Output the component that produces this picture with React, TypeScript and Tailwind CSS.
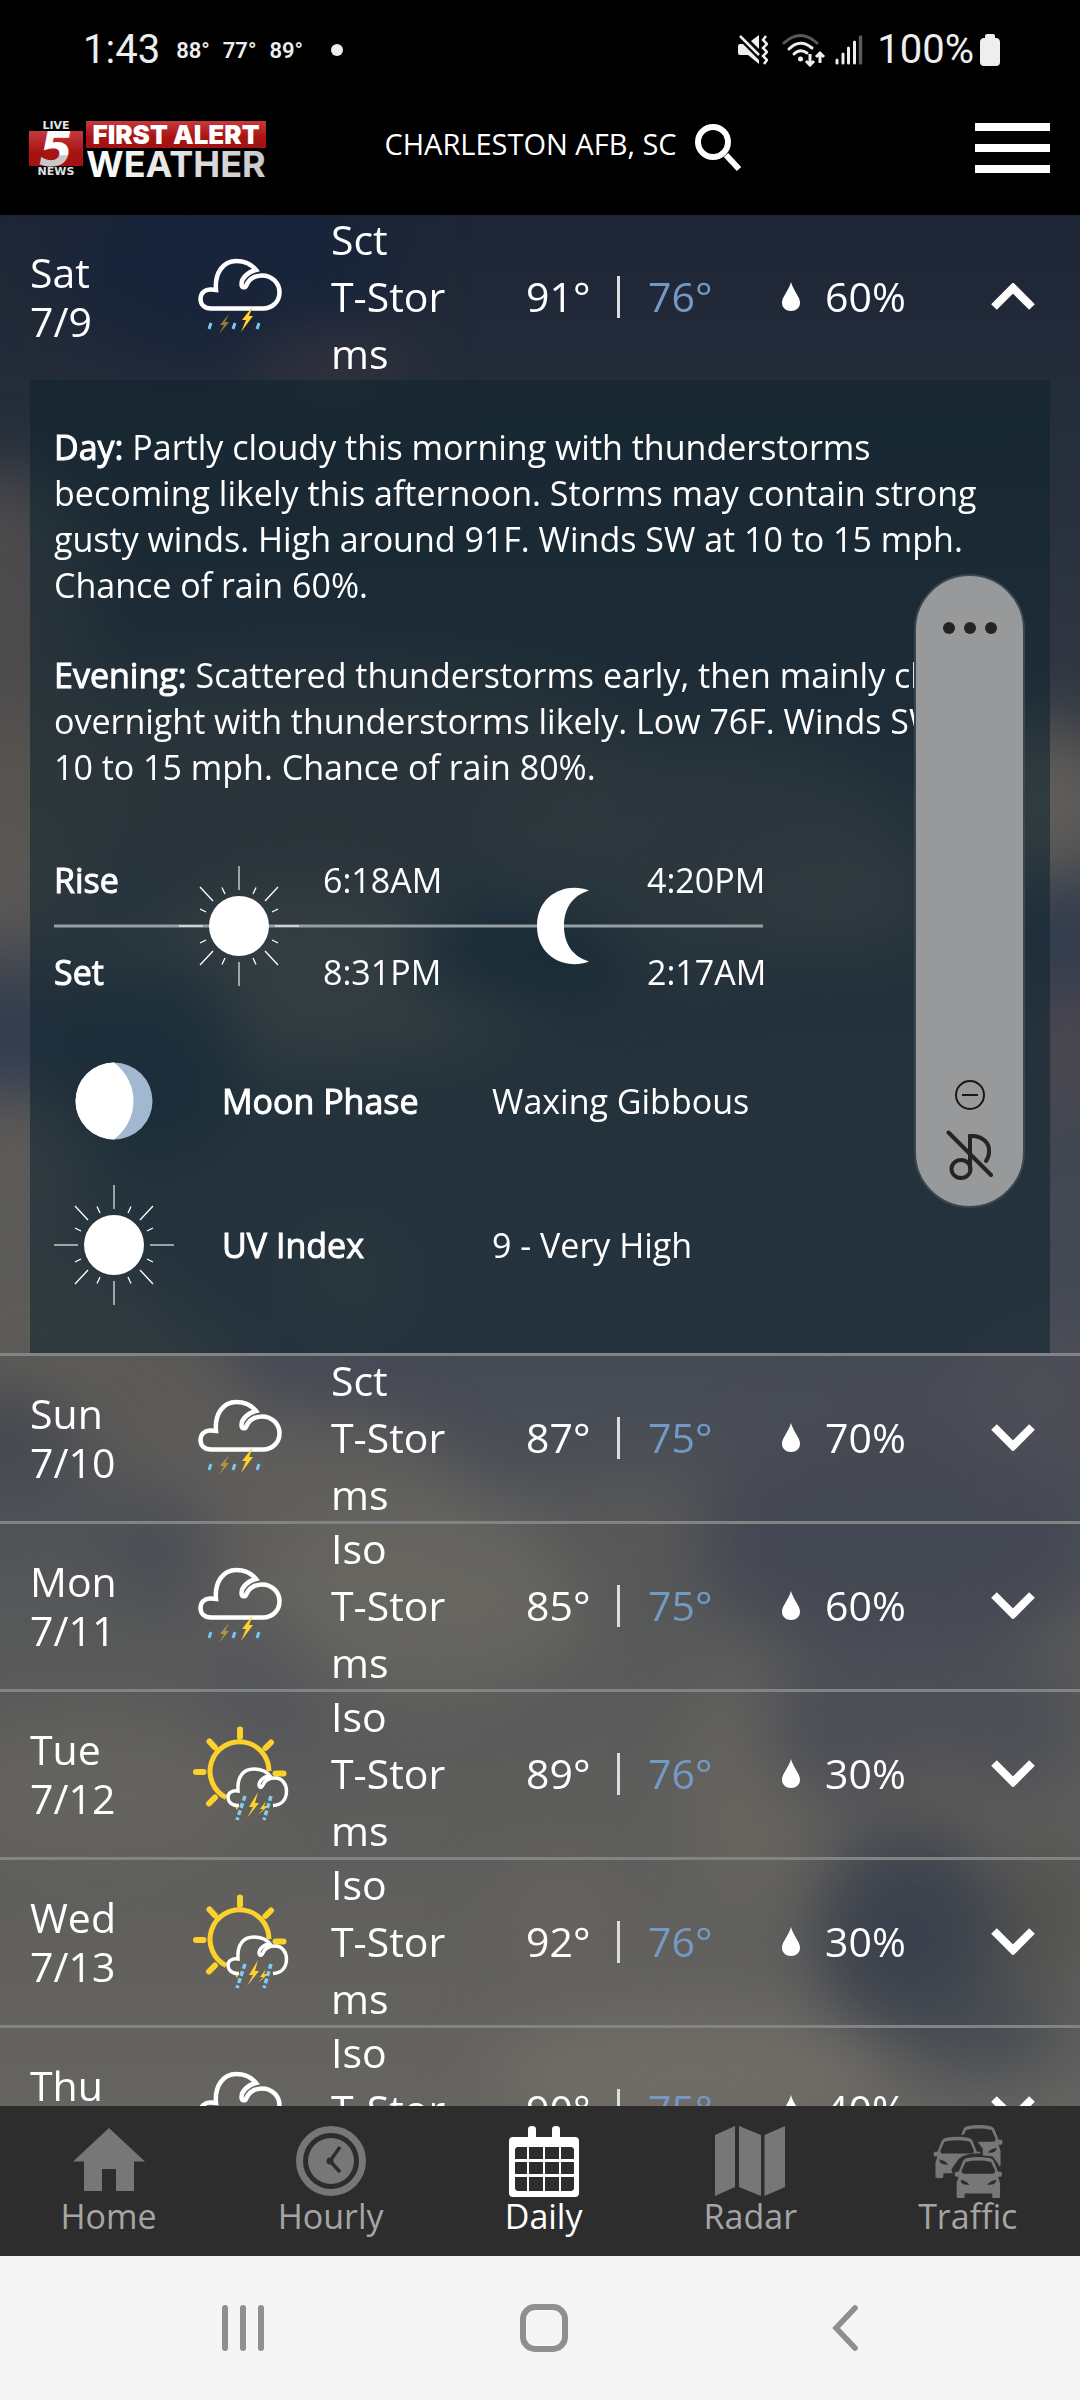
import { useState } from "react";

type IconName = "storm" | "sunStorm";

type Day = {
  name: string;
  date: string;
  icon: IconName;
  chance: string;
  high: string;
  low: string;
  rain: string;
};

const days: Day[] = [
  { name: "Sat", date: "7/9", icon: "storm", chance: "Sct", high: "91°", low: "76°", rain: "60%" },
  { name: "Sun", date: "7/10", icon: "storm", chance: "Sct", high: "87°", low: "75°", rain: "70%" },
  { name: "Mon", date: "7/11", icon: "storm", chance: "Iso", high: "85°", low: "75°", rain: "60%" },
  { name: "Tue", date: "7/12", icon: "sunStorm", chance: "Iso", high: "89°", low: "76°", rain: "30%" },
  { name: "Wed", date: "7/13", icon: "sunStorm", chance: "Iso", high: "92°", low: "76°", rain: "30%" },
  { name: "Thu", date: "7/14", icon: "storm", chance: "Iso", high: "90°", low: "75°", rain: "40%" },
];

function StormIcon() {
  return (
    <svg viewBox="0 0 84 77" className="h-[77px] w-[84px]" fill="none" aria-hidden="true">
      <path
        d="M18 32C16.500 15 25 3 38.500 3C47 3 54 7 58 12C50 14 43.500 20 43.500 26C43.500 30 47 30.500 48.500 27C51 21 57 17.500 64 17.500C74 17.500 81.500 25 81.500 34.500C81.500 43 75 50.500 65 50.500H13C6 50.500 2.500 46 2.500 41C2.500 35 7 31 13 31.500Z"
        stroke="white"
        strokeWidth="4.500"
      />
      <path d="M31 56L22 67H26L21 76L31 64H27Z" fill="#ffd02e" opacity=".52" />
      <path d="M55 48L44 62H48L43 74L55 58H51Z" fill="#ffd02e" />
      <path d="M13 65L11 71M37 65L35 71M61 65L59 71" stroke="#75c8f2" strokeWidth="3" />
    </svg>
  );
}

function SunStormIcon() {
  return (
    <svg viewBox="12 16 97 97" className="h-[97px] w-[97px]" fill="none" aria-hidden="true">
      <path d="M46 88.500A29.500 29.500 0 1 1 89 62" stroke="#fdd12c" strokeWidth="5" />
      <path
        d="M60 20.500V28M29.500 32.500L35 38.500M91 33.500L85.500 39M16 63H23.500M95.500 64.500H103.500M29 94.500L35 88.500"
        stroke="#fdd12c"
        strokeWidth="6"
        strokeLinecap="round"
      />
      <path
        d="M59 96.500C52 97 48 93 48 88C48 84 52 81 58 82C57 68 63 60 74 60C81 60 87 63 90 67C84 67 79 72 79 76C80 80 82 78 83 76C85 71 90 69 95 69C102 69 106.500 75 106.500 82C106.500 90 102 96 93 96.500"
        stroke="white"
        strokeWidth="3.500"
      />
      <path d="M65 87L57 111M91 87L84 111" stroke="#7fcdf3" strokeWidth="3.500" strokeDasharray="5 2.500" />
      <path d="M78 83L69 98H73L67 109L79 94H75ZM86 92L80 100H83L78 106L88 97H84ZM55 98L58 98L57 101Z" fill="#fdd12c" />
    </svg>
  );
}

function SunIcon() {
  return (
    <svg viewBox="0 0 120 120" className="h-[120px] w-[120px]" fill="none" stroke="white" aria-hidden="true">
      <circle cx="60" cy="60" r="30" fill="white" stroke="none" />
      <path d="M60 0V24M60 96V120M0 60H24M96 60H120" strokeWidth="2" opacity=".55" />
      <path
        d="M21 21L34 35M99 21L86 35M21 99L34 85M99 99L86 85M43 21.500L46 28M77 21.500L74 28M43 98.500L46 92M77 98.500L74 92M21 43L27 46M99 43L93 46M21 77L27 74M99 77L93 74"
        strokeWidth="1.300"
      />
    </svg>
  );
}

function Details() {
  return (
    <div className="mx-[30px] bg-[rgba(16,36,47,0.6)] px-6 pt-11 pb-12 text-[34px] leading-[46px]">
      <p>
        <b className="font-normal [-webkit-text-stroke:1px_white]">Day:</b> Partly cloudy this morning with
        thunderstorms becoming likely this afternoon. Storms may contain strong gusty winds. High around 91F. Winds SW
        at 10 to 15 mph. Chance of rain 60%.
      </p>
      <p className="mt-11">
        <b className="font-normal [-webkit-text-stroke:1px_white]">Evening:</b> Scattered thunderstorms early, then
        mainly cloudy overnight with thunderstorms likely. Low 76F. Winds SW at 10 to 15 mph. Chance of rain 80%.
      </p>
      <div className="relative mt-11 grid w-[709px] grid-cols-[125px_144px_214px_110px_auto] grid-rows-[92px_92px] items-center">
        <div className="absolute inset-x-0 top-1/2 h-[3px] -translate-y-1/2 bg-[#989fa3]" />
        <span className="[-webkit-text-stroke:1px_white]">Rise</span>
        <div className="relative row-span-2">
          <SunIcon />
        </div>
        <span>6:18AM</span>
        <svg viewBox="0 0 52 78" className="relative row-span-2 h-[78px] w-[52px]" aria-hidden="true">
          <path d="M52 3.500C30 -5 0 7 0 39C0 71 30 83 52 74.500C34 69 27 55 27 39C27 23 34 9 52 3.500Z" fill="white" />
        </svg>
        <span>4:20PM</span>
        <span className="[-webkit-text-stroke:1px_white]">Set</span>
        <span>8:31PM</span>
        <span>2:17AM</span>
      </div>
      <dl className="mt-[23px] grid grid-cols-[168px_270px_auto] grid-rows-[120px_120px] items-center gap-y-6">
        <svg viewBox="0 0 120 120" className="h-[120px] w-[120px]" aria-hidden="true">
          <circle cx="60" cy="60" r="38.500" fill="#a1b8d0" />
          <path d="M60 21.500A38.500 38.500 0 0 0 60 98.500C86 78 86 42 60 21.500Z" fill="white" />
        </svg>
        <dt className="[-webkit-text-stroke:1px_white]">Moon Phase</dt>
        <dd>Waxing Gibbous</dd>
        <SunIcon />
        <dt className="[-webkit-text-stroke:1px_white]">UV Index</dt>
        <dd>9 - Very High</dd>
      </dl>
    </div>
  );
}

function DayRow({ day, open, onToggle }: { day: Day; open: boolean; onToggle: () => void }) {
  return (
    <li className="border-t-[3px] border-[#828384] first:border-t-0">
      <button
        type="button"
        onClick={onToggle}
        aria-expanded={open}
        className="grid min-h-[165px] w-full grid-cols-[minmax(0,150fr)_minmax(0,151fr)_minmax(0,195fr)_minmax(0,91fr)_minmax(0,31fr)_minmax(0,134fr)_minmax(0,43fr)_minmax(0,166fr)_minmax(0,59fr)] items-center px-[30px] pb-[2px] text-left text-[41px] leading-[57px]"
      >
        <span className="leading-[49px]">
          {day.name}
          <br />
          {day.date}
        </span>
        <span className="flex w-[120px] justify-center">{day.icon === "storm" ? <StormIcon /> : <SunStormIcon />}</span>
        <span className="-my-1 w-[130px]">
          {day.chance} <span className="block break-all">T-Storms</span>
        </span>
        <span>{day.high}</span>
        <span className="h-[42px] w-[3px] bg-[#dddddd]" />
        <span className="text-[#7399c4]">{day.low}</span>
        <svg viewBox="0 0 18 29" className="h-[29px] w-[18px]" fill="white" aria-hidden="true">
          <path d="M9 0C11 8 18 15 18 20.500C18 26 14 29 9 29C4 29 0 26 0 20.500C0 15 7 8 9 0Z" />
        </svg>
        <span>{day.rain}</span>
        <svg viewBox="0 0 44 27" className="h-[27px] w-[44px]" fill="none" stroke="white" strokeWidth="8" aria-hidden="true">
          <path d={open ? "M3 24L22 5L41 24" : "M3 3L22 22L41 3"} />
        </svg>
      </button>
      {open && <Details />}
    </li>
  );
}

function Sky() {
  return (
    <svg
      viewBox="0 0 1080 1891"
      preserveAspectRatio="none"
      className="absolute inset-0 h-full w-full"
      aria-hidden="true"
    >
      <defs>
        <linearGradient id="sky" x1="0" y1="0" x2="0" y2="1">
          <stop offset="0" stopColor="#1e2636" />
          <stop offset=".12" stopColor="#252e3b" />
          <stop offset=".3" stopColor="#353b46" />
          <stop offset=".45" stopColor="#414751" />
          <stop offset=".6" stopColor="#444955" />
          <stop offset=".75" stopColor="#585959" />
          <stop offset="1" stopColor="#666460" />
        </linearGradient>
        <filter id="soft" x="-50%" y="-50%" width="200%" height="200%" colorInterpolationFilters="sRGB">
          <feGaussianBlur stdDeviation="32" />
        </filter>
      </defs>
      <rect width="1080" height="1891" fill="url(#sky)" />
      <g filter="url(#soft)">
        <ellipse cx="230" cy="50" rx="170" ry="100" fill="#18243a" />
        <ellipse cx="330" cy="150" rx="80" ry="30" fill="#37353e" />
        <ellipse cx="0" cy="420" rx="90" ry="170" fill="#4c4b4c" />
        <ellipse cx="0" cy="620" rx="120" ry="120" fill="#5a5856" />
        <ellipse cx="300" cy="560" rx="350" ry="110" fill="#55524f" opacity=".8" />
        <ellipse cx="0" cy="840" rx="60" ry="60" fill="#303a50" />
        <ellipse cx="10" cy="960" rx="80" ry="90" fill="#5d5b58" />
        <ellipse cx="320" cy="760" rx="240" ry="90" fill="#6a655f" opacity=".9" />
        <ellipse cx="700" cy="640" rx="220" ry="110" fill="#5b5957" opacity=".8" />
        <ellipse cx="1040" cy="590" rx="90" ry="80" fill="#605d59" />
        <ellipse cx="850" cy="690" rx="100" ry="50" fill="#625e5a" opacity=".8" />
        <ellipse cx="1060" cy="720" rx="80" ry="60" fill="#333d4d" />
        <ellipse cx="1070" cy="830" rx="50" ry="60" fill="#4b4750" />
        <ellipse cx="520" cy="740" rx="110" ry="45" fill="#243545" />
        <ellipse cx="150" cy="840" rx="90" ry="100" fill="#263848" opacity=".8" />
        <ellipse cx="40" cy="1120" rx="140" ry="80" fill="#5e5c58" />
        <ellipse cx="350" cy="1060" rx="60" ry="60" fill="#565857" opacity=".6" />
        <ellipse cx="160" cy="1190" rx="90" ry="90" fill="#5c5a57" />
        <ellipse cx="300" cy="1300" rx="170" ry="100" fill="#605e5b" />
        <ellipse cx="0" cy="1220" rx="60" ry="50" fill="#454850" />
        <ellipse cx="160" cy="1330" rx="50" ry="60" fill="#4b4e55" />
        <ellipse cx="430" cy="1380" rx="170" ry="100" fill="#666560" />
        <ellipse cx="260" cy="1480" rx="60" ry="70" fill="#55565b" />
        <ellipse cx="100" cy="1580" rx="160" ry="70" fill="#65635e" />
        <ellipse cx="640" cy="1330" rx="90" ry="60" fill="#585858" />
        <ellipse cx="900" cy="1320" rx="200" ry="120" fill="#444853" />
        <ellipse cx="1040" cy="1180" rx="80" ry="80" fill="#4d4e57" />
        <ellipse cx="750" cy="1580" rx="70" ry="120" fill="#66645e" />
        <ellipse cx="920" cy="1510" rx="160" ry="90" fill="#4d4f57" />
        <ellipse cx="940" cy="1590" rx="80" ry="40" fill="#5d5b58" />
        <ellipse cx="910" cy="1720" rx="95" ry="105" fill="#3c424d" />
        <ellipse cx="1050" cy="1700" rx="50" ry="80" fill="#54534f" />
        <ellipse cx="980" cy="1820" rx="90" ry="40" fill="#464b52" />
        <ellipse cx="690" cy="1860" rx="200" ry="60" fill="#706d67" />
        <ellipse cx="560" cy="1700" rx="60" ry="60" fill="#66625e" />
      </g>
    </svg>
  );
}

function StatusBar() {
  return (
    <div className="flex h-[100px] items-center pr-20 pl-[83px] font-['Roboto',sans-serif] text-[40px] text-[#eeeeee]">
      <span>1:43</span>
      <span className="ml-4 flex gap-[13px] text-[22px] font-semibold">
        <span>88°</span>
        <span>77°</span>
        <span>89°</span>
      </span>
      <span className="ml-[28px] h-3 w-3 rounded-full bg-[#eeeeee]" />
      <svg viewBox="0 0 30 30" className="ml-auto h-[30px] w-[30px]" aria-hidden="true">
        <path d="M0 11Q0 9 2 9H5L21 25V29L10 20H2Q0 20 0 18ZM13 6L21 0V14Z" fill="#eeeeee" />
        <path d="M3 0L23 20" stroke="#000" strokeWidth="2" />
        <path d="M2 1L21 20" stroke="#eeeeee" strokeWidth="2.500" />
        <path d="M28 1L25 5L29 9L25 13L29 17L25 21L29 25L26 29" fill="none" stroke="#eeeeee" strokeWidth="2.500" />
      </svg>
      <svg viewBox="0 0 44 34" className="ml-[14px] h-[34px] w-[44px]" fill="none" stroke="#eeeeee" strokeWidth="3" aria-hidden="true">
        <path d="M2 10Q18 -5 35 10" stroke="#5a5a5a" strokeLinecap="round" />
        <path d="M7 16Q18 5 30 15M12 21Q18 15 25 20" strokeLinecap="round" />
        <circle cx="18.500" cy="26" r="2.500" fill="#eeeeee" stroke="none" />
        <path d="M28 21V32M24 28L28 32L32 28M38 30V19M34 24L38 20L42 24" />
      </svg>
      <svg viewBox="0 0 28 30" className="ml-[9px] h-[30px] w-[28px]" aria-hidden="true">
        <path d="M2 28V25M8 28V19M13.500 28V13M19.500 28V7" stroke="#eeeeee" strokeWidth="3" strokeLinecap="round" />
        <path d="M25.500 28V2" stroke="#5a5a5a" strokeWidth="3.500" strokeLinecap="round" />
      </svg>
      <span className="ml-[14px]">100%</span>
      <svg viewBox="0 0 20 32" className="ml-[6px] h-8 w-5" fill="#eeeeee" aria-hidden="true">
        <path d="M5 2Q5 0 7 0H13Q15 0 15 2V4H17Q20 5 20 8V28Q20 32 16 32H4Q0 32 0 28V8Q0 5 3 4H5Z" />
      </svg>
    </div>
  );
}

function Logo() {
  return (
    <svg viewBox="0 0 240 66" className="mt-2 h-[66px] w-[240px]" role="img" aria-label="Live 5 News First Alert Weather">
      <defs>
        <linearGradient id="red" x1="0" y1="0" x2="0" y2="1">
          <stop offset="0" stopColor="#c43a3c" />
          <stop offset=".6" stopColor="#a81414" />
          <stop offset="1" stopColor="#a31111" />
        </linearGradient>
        <linearGradient id="five" x1="0" y1="0" x2="0" y2="1">
          <stop offset="0" stopColor="#d9e2e6" />
          <stop offset=".25" stopColor="#ffffff" />
          <stop offset=".6" stopColor="#ffffff" />
          <stop offset=".62" stopColor="#c8c8c8" />
        </linearGradient>
        <linearGradient id="silver" x1="0" y1="0" x2="1" y2="0">
          <stop offset="0" stopColor="#ffffff" />
          <stop offset="1" stopColor="#c9c9c9" />
        </linearGradient>
      </defs>
      <rect x="0" y="12" width="54" height="35" fill="url(#red)" />
      <text x="27" y="47" textAnchor="middle" className="font-['DejaVu_Sans',sans-serif] text-[48px] font-bold italic" fill="url(#five)">
        5
      </text>
      <text x="27" y="10" textAnchor="middle" className="font-['DejaVu_Sans',sans-serif] text-[11px] font-bold" fill="#e4e8ea">
        LIVE
      </text>
      <text x="27" y="56" textAnchor="middle" className="font-['DejaVu_Sans',sans-serif] text-[11px] font-bold" fill="#e0e0e0">
        NEWS
      </text>
      <rect x="57" y="2" width="180" height="27" fill="url(#red)" />
      <text x="147" y="25" textAnchor="middle" className="font-['Inter',sans-serif] text-[26px] font-black" fill="white">
        FIRST ALERT
      </text>
      <text x="147" y="58" textAnchor="middle" className="font-['Inter',sans-serif] text-[36px] font-bold" fill="url(#silver)">
        WEATHER
      </text>
    </svg>
  );
}

function Header() {
  return (
    <header className="grid h-[115px] grid-cols-[1fr_auto_1fr] items-center pr-[30px] pb-[20px] pl-[29px]">
      <Logo />
      <button type="button" className="flex items-center gap-[18px] pl-12 text-[29px]">
        <span className="pb-2">CHARLESTON AFB, SC</span>
        <svg viewBox="0 0 48 48" className="h-12 w-12" fill="none" stroke="white" aria-hidden="true">
          <circle cx="18" cy="18" r="15" strokeWidth="6" />
          <path d="M31 31L44 45" strokeWidth="6" />
        </svg>
      </button>
      <button type="button" aria-label="Menu" className="flex w-[75px] flex-col gap-[13px] justify-self-end">
        <span className="h-2 bg-white" />
        <span className="h-2 bg-white" />
        <span className="h-2 bg-white" />
      </button>
    </header>
  );
}

function VolumePanel() {
  return (
    <div
      role="group"
      aria-label="Volume"
      className="absolute top-[574px] right-[55px] flex h-[634px] w-[111px] flex-col items-center rounded-full border-2 border-[#39464f] bg-[#97999b] pt-[46px] pb-[26px]"
    >
      <button type="button" aria-label="More" className="flex gap-[9px]">
        <span className="h-3 w-3 rounded-full bg-[#242424]" />
        <span className="h-3 w-3 rounded-full bg-[#242424]" />
        <span className="h-3 w-3 rounded-full bg-[#242424]" />
      </button>
      <svg viewBox="0 0 30 30" className="mt-auto h-[30px] w-[30px]" fill="none" stroke="#181818" strokeWidth="2" aria-hidden="true">
        <circle cx="15" cy="15" r="14" />
        <path d="M7 15H23" />
      </svg>
      <svg
        viewBox="0 0 48 50"
        className="mt-5 h-[50px] w-[48px]"
        fill="none"
        stroke="#242424"
        strokeWidth="4"
        strokeLinecap="round"
        aria-hidden="true"
      >
        <path d="M2.500 2.500L45 45" />
        <path d="M24 38V6C36 5 44 13 43 22Q43 27 40 31" />
        <ellipse cx="15" cy="39" rx="9.500" ry="9" />
      </svg>
    </div>
  );
}

function HomeIcon() {
  return (
    <svg viewBox="0 0 72 73" className="h-[73px] w-[72px]" fill="#777777" aria-hidden="true">
      <path d="M36 3L72 36.500H61V66H43V44H29V66H11V36.500H0Z" />
    </svg>
  );
}

function ClockIcon() {
  return (
    <svg viewBox="0 0 70 73" className="h-[73px] w-[70px]" fill="none" aria-hidden="true">
      <circle cx="35" cy="36" r="31.500" stroke="#777777" strokeWidth="7" />
      <circle cx="35" cy="36" r="23" fill="#777777" />
      <path d="M44 22L34 36L44 47" stroke="#2d2d2d" strokeWidth="3.500" />
      <circle cx="34" cy="36" r="3.500" fill="#2d2d2d" />
    </svg>
  );
}

function CalendarIcon() {
  return (
    <svg viewBox="0 0 70 73" className="h-[73px] w-[70px]" aria-hidden="true">
      <path d="M4 12H19V4Q19 1 23 1Q27 1 27 4V12H43V4Q43 1 47 1Q51 1 51 4V12H66Q70 12 70 16V68Q70 72 66 72H4Q0 72 0 68V16Q0 12 4 12Z" fill="white" />
      <path
        d="M8 22H18V34H6V24ZM20 22H34V34H20ZM36 22H50V34H36ZM52 22H63L65 24V34H52ZM6 37H18V49H6ZM20 37H34V49H20ZM36 37H50V49H36ZM52 37H65V49H52ZM6 52H18V66H8L6 64ZM20 52H34V66H20ZM36 52H50V66H36ZM52 52H65V64L63 66H52Z"
        fill="#2d2d2d"
      />
    </svg>
  );
}

function MapIcon() {
  return (
    <svg viewBox="0 0 70 73" className="h-[73px] w-[70px]" fill="#777777" aria-hidden="true">
      <path d="M0 10L20 1V62L0 71ZM24 1L46 10V71L24 62ZM49.500 10L70 1V62L49.500 71Z" />
    </svg>
  );
}

const carBody =
  "M4 15L8 5Q9 2 13 1Q24 -1 35 1Q39 2 40 5L44 15H47Q49 17 47 20L44 20L46 26V41Q42 43 38 41V37H10V41Q6 43 2 41V26L4 20L1 20Q-1 17 1 15ZM11 5L7 14Q7 17 10 17H38Q41 17 41 14L37 5Q24 2 11 5ZM6 23Q6 29 15 28Q12 24 6 23ZM42 23Q42 29 33 28Q36 24 42 23Z";

function TrafficIcon() {
  return (
    <svg viewBox="0 0 70 74" className="h-[73px] w-[70px]" fill="#777777" fillRule="evenodd" aria-hidden="true">
      <defs>
        <mask id="behindLeft">
          <path d="M-2 -2H72V76H-2Z" fill="white" />
          <path d="M20 76V50L18 45L26 34Q34 27 58 29L70 36V76Z" fill="black" />
        </mask>
        <mask id="behindRight">
          <path d="M-2 -2H72V76H-2Z" fill="white" />
          <path d="M0 76V10H36Q42 10 44 16L50 24V31L60 32L66 40V76Z" fill="black" />
        </mask>
      </defs>
      <g mask="url(#behindRight)">
        <path transform="translate(22)" d={carBody} />
      </g>
      <g mask="url(#behindLeft)">
        <path transform="translate(0 12)" d={carBody} />
      </g>
      <path transform="translate(21.500 32.500)" d={carBody} />
    </svg>
  );
}

const tabs = [
  { label: "Home", Icon: HomeIcon },
  { label: "Hourly", Icon: ClockIcon },
  { label: "Daily", Icon: CalendarIcon, active: true },
  { label: "Radar", Icon: MapIcon },
  { label: "Traffic", Icon: TrafficIcon },
];

export default function App() {
  const [open, setOpen] = useState(0);
  return (
    <div className="relative flex h-screen flex-col overflow-hidden bg-black font-['Open_Sans',sans-serif] text-white">
      <StatusBar />
      <Header />
      <main className="relative min-h-0 flex-1">
        <Sky />
        <ul className="relative h-full overflow-y-auto [scrollbar-width:none]">
          {days.map((day, i) => (
            <DayRow key={day.date} day={day} open={open === i} onToggle={() => setOpen(open === i ? -1 : i)} />
          ))}
        </ul>
      </main>
      <nav className="flex h-[150px] justify-around bg-[#2d2d2d] pt-[19px] pr-[2px] text-[34px] leading-[36px]">
        {tabs.map(({ label, Icon, active }) => (
          <a
            key={label}
            href={`#${label.toLowerCase()}`}
            aria-current={active ? "page" : undefined}
            className={active ? "flex flex-col items-center text-white" : "flex flex-col items-center text-[#a5a5a5]"}
          >
            <Icon />
            <span>{label}</span>
          </a>
        ))}
      </nav>
      <div className="grid h-36 grid-cols-3 place-items-center bg-[#f5f5f5] pr-[84px] pl-[92px]">
        <button type="button" aria-label="Recent apps" className="flex gap-3">
          <span className="h-[46px] w-[6px] rounded-full bg-[#8f8f8f]" />
          <span className="h-[46px] w-[6px] rounded-full bg-[#8f8f8f]" />
          <span className="h-[46px] w-[6px] rounded-full bg-[#8f8f8f]" />
        </button>
        <button type="button" aria-label="Home screen" className="h-12 w-12 rounded-[15px] border-[6px] border-[#8f8f8f]" />
        <button type="button" aria-label="Back">
          <svg viewBox="0 0 26 46" className="h-[46px] w-[26px]" fill="none" stroke="#8f8f8f" strokeWidth="5.500" strokeLinecap="round" aria-hidden="true">
            <path d="M23 3L4 23L23 43" />
          </svg>
        </button>
      </div>
      <VolumePanel />
    </div>
  );
}
